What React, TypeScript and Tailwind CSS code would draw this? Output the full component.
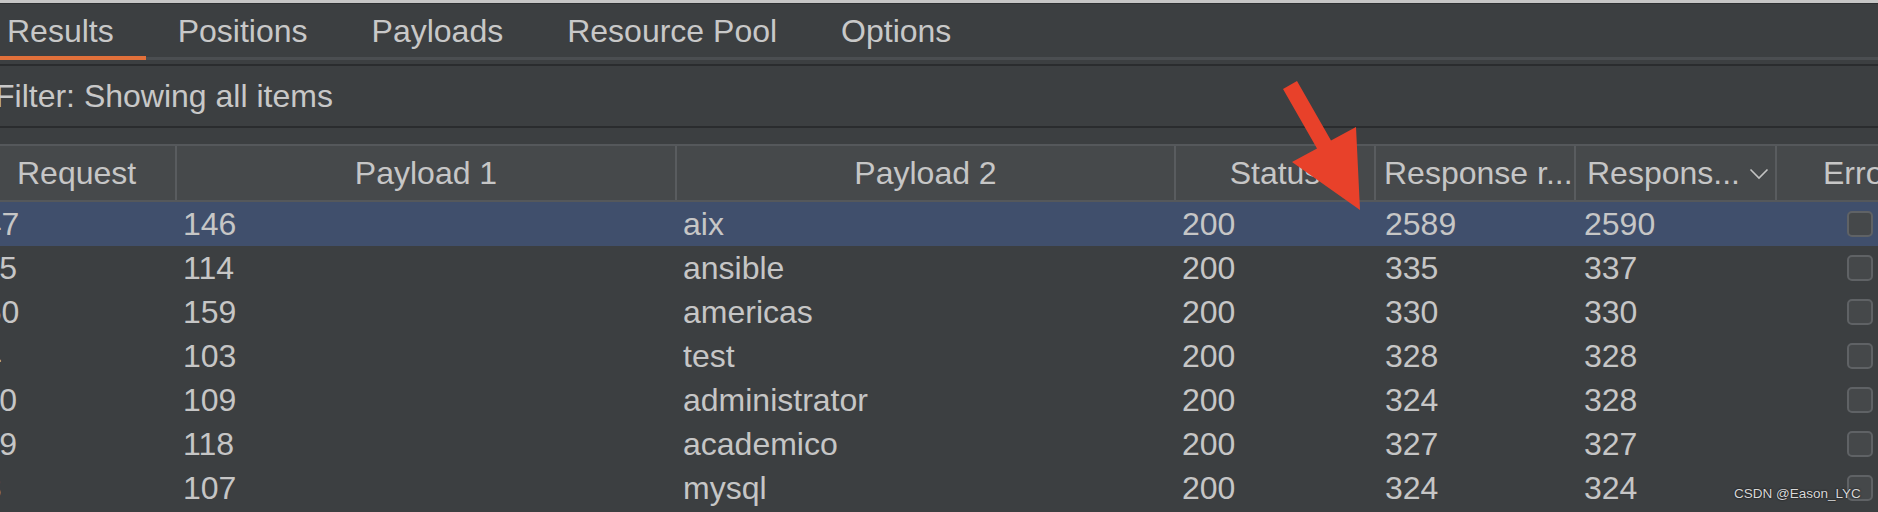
import React from 'react';

interface Row {
  req: string;
  p1: string;
  p2: string;
  status: string;
  len1: string;
  len2: string;
  selected?: boolean;
}

const rows: Row[] = [
  { req: '147', p1: '146', p2: 'aix', status: '200', len1: '2589', len2: '2590', selected: true },
  { req: '115', p1: '114', p2: 'ansible', status: '200', len1: '335', len2: '337' },
  { req: '160', p1: '159', p2: 'americas', status: '200', len1: '330', len2: '330' },
  { req: '94', p1: '103', p2: 'test', status: '200', len1: '328', len2: '328' },
  { req: '110', p1: '109', p2: 'administrator', status: '200', len1: '324', len2: '328' },
  { req: '119', p1: '118', p2: 'academico', status: '200', len1: '327', len2: '327' },
  { req: '98', p1: '107', p2: 'mysql', status: '200', len1: '324', len2: '324' },
];

const tabs = ['Results', 'Positions', 'Payloads', 'Resource Pool', 'Options'];

const gridCols = 'grid grid-cols-[177px_500px_499px_200px_200px_201px_101px]';

const App: React.FC = () => {
  return (
    <div className="relative w-[1878px] h-[512px] overflow-hidden bg-[#3c3f41] text-[#c6c6c6] font-['Liberation_Sans',Arial,sans-serif] text-[32px] leading-none">
      <div className="h-[3px] bg-[#c6c6c6]" />
      <div className="h-[1px] bg-[#2e3032]" />

      {/* tabs */}
      <div className="flex h-[56px] border-b-[3px] border-[#4b4e51] -ml-[25px]">
        {tabs.map((t, i) => (
          <div key={t} className="relative flex items-center px-8 text-[#c8c8c8]">
            {t}
            {i === 0 && <div className="absolute left-0 right-0 -bottom-[3px] h-[4px] bg-[#e2703a]" />}
          </div>
        ))}
      </div>

      {/* filter bar */}
      <div className="mt-[4px] h-[64px] border-y-2 border-[#2a2c2e] flex items-center">
        <span className="-ml-[5px] text-[#c8c8c8]">Filter: Showing all items</span>
      </div>

      {/* table */}
      <div className="mt-[16px]">
        <div className={`${gridCols} h-[58px] bg-[#46494b] border-y-2 border-[#55585b]`}>
          <div className="flex items-center pl-[17px] border-r-2 border-[#595c5f]">Request</div>
          <div className="flex items-center justify-center border-r-2 border-[#595c5f]">Payload 1</div>
          <div className="flex items-center justify-center border-r-2 border-[#595c5f]">Payload 2</div>
          <div className="flex items-center justify-center border-r-2 border-[#595c5f]">Status</div>
          <div className="flex items-center pl-[8px] border-r-2 border-[#595c5f] whitespace-nowrap">Response r...</div>
          <div className="flex items-center pl-[11px] border-r-2 border-[#595c5f] whitespace-nowrap">
            Respons...
            <svg className="ml-[9px] mt-[2px]" width="20" height="12" viewBox="0 0 20 12" fill="none">
              <path d="M1.5 1.5 L10 10 L18.5 1.5" stroke="#c3c3c3" strokeWidth="1.6" />
            </svg>
          </div>
          <div className="flex items-center pl-[46px] overflow-hidden whitespace-nowrap">Error</div>
        </div>

        {rows.map((r) => (
          <div key={r.p1} className={`${gridCols} h-[44px] ${r.selected ? 'bg-[#404f6c]' : ''}`}>
            <div className="flex items-center overflow-hidden">
              <span className="-ml-[34px]">{r.req}</span>
            </div>
            <div className="flex items-center pl-[6px]">{r.p1}</div>
            <div className="flex items-center pl-[6px]">{r.p2}</div>
            <div className="flex items-center pl-[6px]">{r.status}</div>
            <div className="flex items-center pl-[9px]">{r.len1}</div>
            <div className="flex items-center pl-[8px]">{r.len2}</div>
            <div className="flex items-center pl-[70px]">
              <div className="w-[26px] h-[26px] rounded-[5px] border-2 border-[#5f6265] bg-[#45484a]" />
            </div>
          </div>
        ))}
      </div>

      {/* annotation arrow */}
      <svg className="absolute left-0 top-0 pointer-events-none" width="1878" height="512" viewBox="0 0 1878 512">
        <polygon
          points="1283,89 1297,81 1331,140.6 1356,127 1360,210 1292,162 1317,148.4"
          fill="#e8412a"
        />
      </svg>

      {/* watermark */}
      <div className="absolute left-[1734px] top-[487px] text-[13.5px] text-[#d8d8d8] [text-shadow:0_0_2px_#000] whitespace-nowrap">
        CSDN @Eason_LYC
      </div>
    </div>
  );
};

export default App;
